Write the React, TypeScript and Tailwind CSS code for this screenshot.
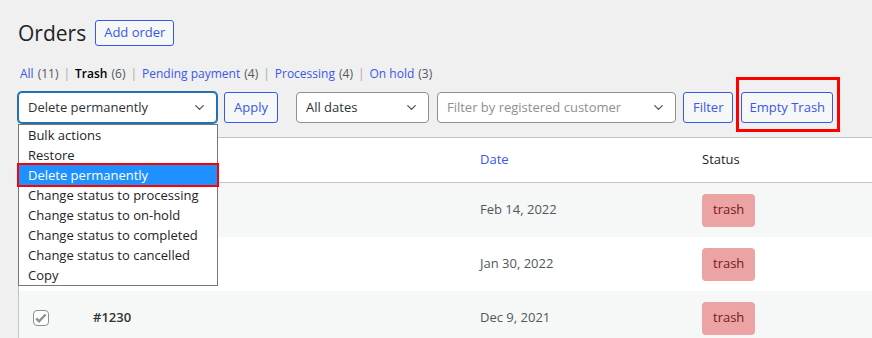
import { ChevronDown } from 'lucide-react'

const font = { fontFamily: '"Open Sans", "Noto Sans", sans-serif' }

const views = [
  { label: 'All', count: 11 },
  { label: 'Trash', count: 6, current: true },
  { label: 'Pending payment', count: 4 },
  { label: 'Processing', count: 4 },
  { label: 'On hold', count: 3 },
]

const bulkOptions = [
  'Bulk actions',
  'Restore',
  'Delete permanently',
  'Change status to processing',
  'Change status to on-hold',
  'Change status to completed',
  'Change status to cancelled',
  'Copy',
]

// order numbers of the first two rows sit under the open menu
const rows = [
  { id: '', date: 'Feb 14, 2022' },
  { id: '', date: 'Jan 30, 2022' },
  { id: '#1230', date: 'Dec 9, 2021' },
]

function Select({ value, className, muted }: { value: string; className: string; muted?: boolean }) {
  return (
    <div
      className={`flex h-[31px] items-center justify-between rounded-[4px] border bg-white pl-[9px] pr-[9px] text-[13px] ${className} ${muted ? 'text-[#8c8f94]' : 'text-[#2c3338]'}`}
    >
      <span>{value}</span>
      <ChevronDown className="h-[15px] w-[15px] text-[#50575e]" strokeWidth={2.2} />
    </div>
  )
}

function Checkbox() {
  return (
    <span className="flex h-4 w-4 items-center justify-center rounded-[4px] border border-[#8c8f94] bg-white">
      <svg viewBox="0 0 16 16" className="h-[14px] w-[14px]">
        <path d="M2.5 8.5l3.3 3.3 7.5-7.8" fill="none" stroke="#8c8f94" strokeWidth="2.8" />
      </svg>
    </span>
  )
}

export default function App() {
  return (
    <div className="h-[338px] w-[872px] overflow-hidden bg-[#f0f0f1] pl-[18px] pt-[20px] text-[#1d2327]" style={font}>
      <div className="flex items-center gap-[9px]">
        <h1 className="text-[21px] leading-[26px]">Orders</h1>
        <button className="h-[26px] rounded-[3px] border border-[#3858e9] bg-[#f6f7f7] px-[8px] text-[13px] text-[#3858e9]">
          Add order
        </button>
      </div>

      <ul className="mt-[19px] flex items-center pl-[2px] text-[12px] leading-[18px]">
        {views.map((v, i) => (
          <li key={v.label} className="flex items-center">
            {i > 0 && <span className="px-[5px] text-[#a7aaad]">|</span>}
            <span className={v.current ? 'font-semibold text-black' : 'text-[#3858e9]'}>{v.label}</span>
            <span className="ml-[4px] text-[#50575e]">({v.count})</span>
          </li>
        ))}
      </ul>

      <div className="mt-[9px] flex items-center">
        <div className="relative">
          <Select value="Delete permanently" className="w-[199px] border-[#2271b1] shadow-[0_0_0_1px_#2271b1]" />
          <div className="absolute left-0 top-[32px] z-10 w-[200px] border border-[#767676] bg-white text-[13px] leading-[20px] text-[#1d2327]">
            {bulkOptions.map((o) => (
              <div
                key={o}
                className={
                  o === 'Delete permanently'
                    ? 'relative bg-[#1e90ff] pl-[9px] text-white outline outline-2 outline-[#ff0000]'
                    : 'pl-[9px]'
                }
              >
                {o}
              </div>
            ))}
          </div>
        </div>
        <button className="ml-[7px] h-[31px] rounded-[3px] border border-[#3858e9] bg-[#f6f7f7] px-[9px] text-[13px] text-[#3858e9]">
          Apply
        </button>
        <Select value="All dates" className="ml-[18px] w-[133px] border-[#8c8f94]" />
        <Select value="Filter by registered customer" muted className="ml-[8px] w-[239px] border-[#8c8f94]" />
        <button className="ml-[7px] h-[31px] rounded-[3px] border border-[#3858e9] bg-[#f6f7f7] px-[9px] text-[13px] text-[#3858e9]">
          Filter
        </button>
        <span className="relative ml-[8px]">
          <button className="h-[31px] rounded-[3px] border border-[#3858e9] bg-[#f6f7f7] px-[7px] text-[13px] text-[#3858e9]">
            Empty Trash
          </button>
          <span className="pointer-events-none absolute -bottom-[9px] -left-[5px] -right-[7px] -top-[15px] border-[3px] border-[#ff0000]" />
        </span>
      </div>

      <div className="mt-[14px] border-l border-t border-[#c3c4c7] bg-white text-[13px]">
        <div className="grid h-[45px] grid-cols-[65px_386px_222px_1fr] items-center border-b border-[#c3c4c7]">
          <div className="pl-[14px]" />
          <div className="pl-[10px]" />
          <div className="pl-[10px] text-[#3858e9]">Date</div>
          <div className="pl-[10px]">Status</div>
        </div>
        {rows.map((r, i) => (
          <div
            key={r.date}
            className={`grid h-[54px] grid-cols-[65px_386px_222px_1fr] items-center ${i % 2 === 0 ? 'bg-[#f6f7f7]' : 'bg-white'}`}
          >
            <div className="pl-[14px]">
              <Checkbox />
            </div>
            <div className="pl-[9px] font-semibold text-[#2c3338]">{r.id}</div>
            <div className="pl-[10px] text-[#50575e]">{r.date}</div>
            <div className="pl-[10px]">
              <span className="inline-flex h-[33px] items-center rounded-[4px] bg-[#eba3a3] px-[11px] text-[#761919]">
                trash
              </span>
            </div>
          </div>
        ))}
      </div>
    </div>
  )
}
